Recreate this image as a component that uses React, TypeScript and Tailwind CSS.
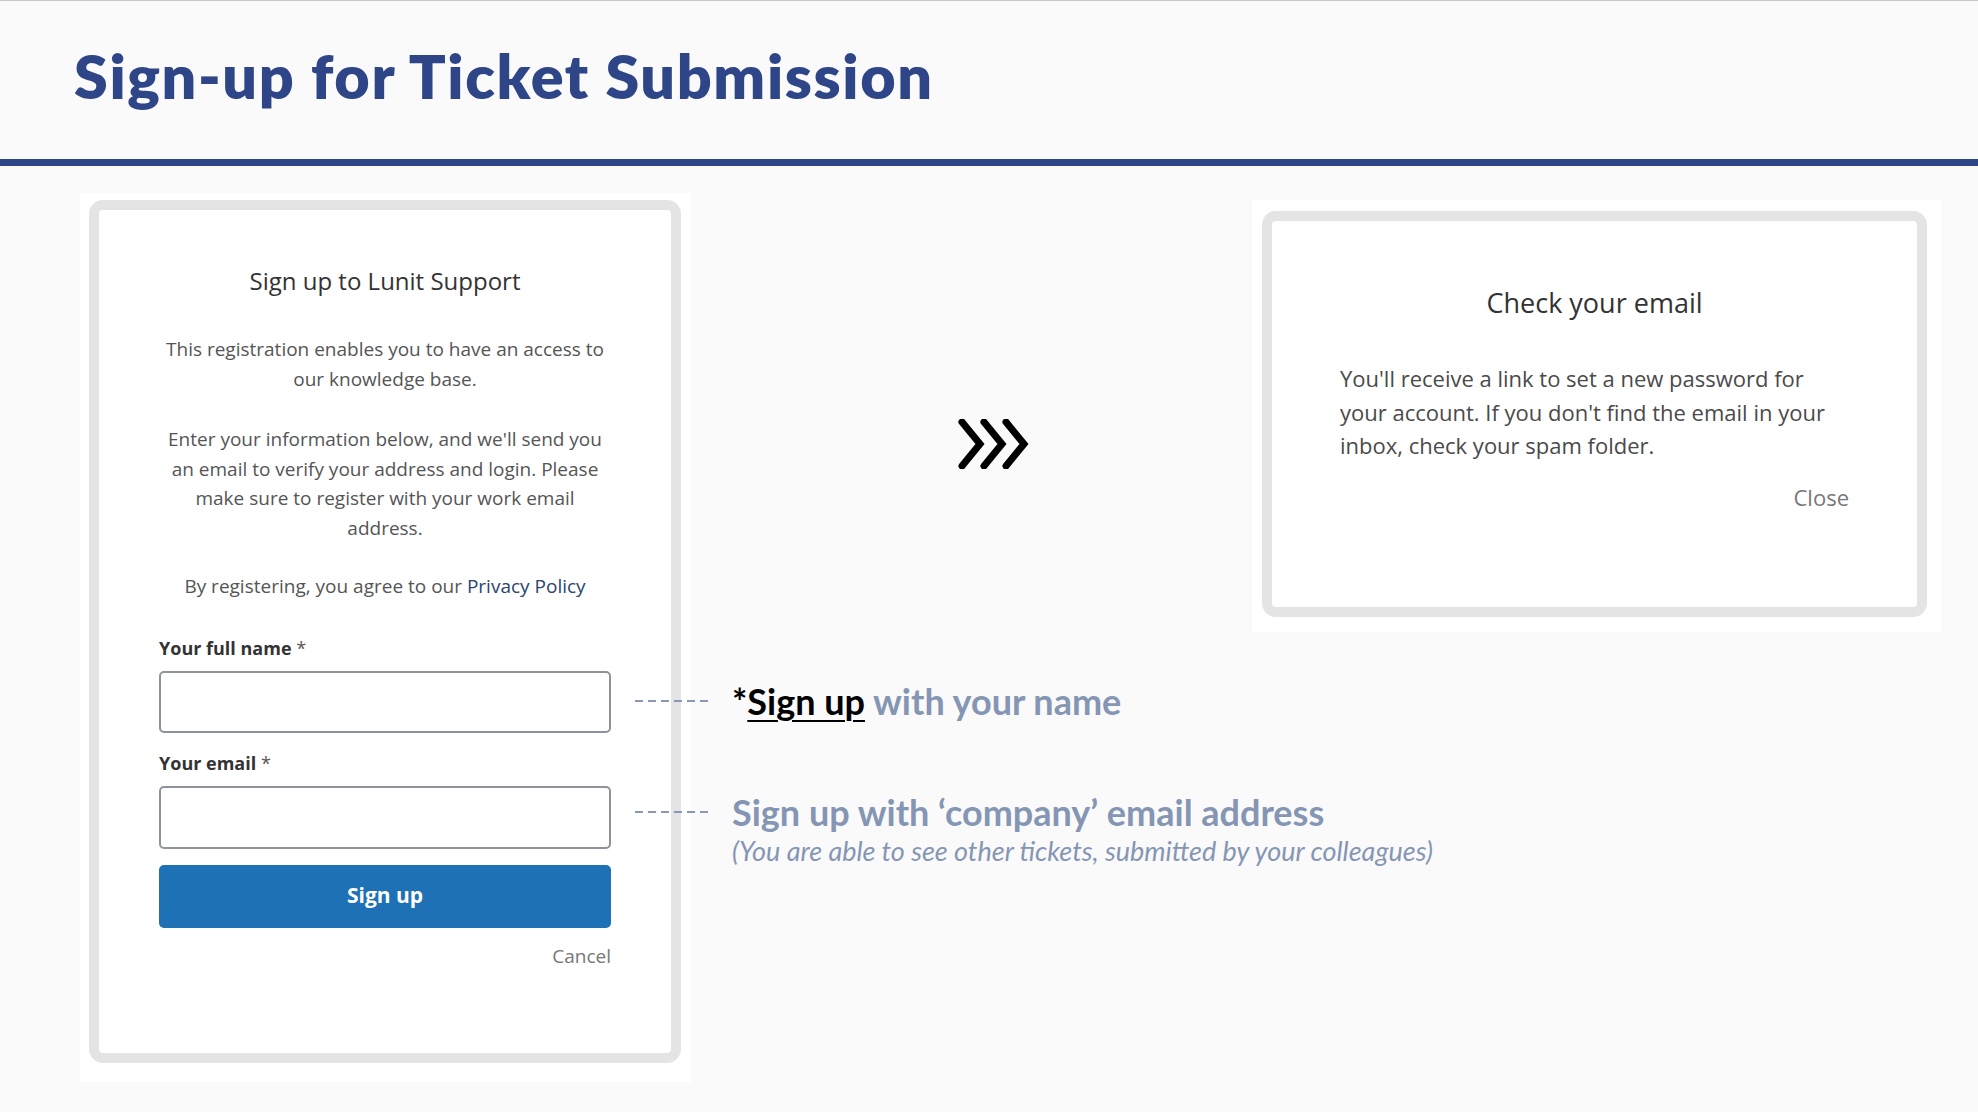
import React from "react";

function Chevrons() {
  return (
    <svg width="72" height="50" viewBox="0 0 72 50" fill="none">
      {[4, 26, 48].map((x) => (
        <path
          key={x}
          d={`M${x} 3 L${x + 18} 25 L${x} 47`}
          stroke="#000"
          strokeWidth="7"
          strokeLinejoin="miter"
          strokeLinecap="round"
        />
      ))}
    </svg>
  );
}

function Dash() {
  return (
    <svg width="78" height="4" viewBox="0 0 78 4" className="shrink-0 ml-[-56px]">
      <line x1="0" y1="2" x2="78" y2="2" stroke="#8a98b6" strokeWidth="2" strokeDasharray="8 5" />
    </svg>
  );
}

function LeftCard() {
  return (
    <div className="w-[611px] h-[889px] bg-white pt-[7px] pb-[19px] pl-[9px] pr-[10px] shrink-0">
      <div className="h-full border-[10px] border-[#e4e4e4] rounded-[14px] bg-white px-[60px] pt-[55px] flex flex-col text-center font-['Open_Sans',sans-serif]">
        <div className="text-[24px] leading-[32px] text-[#333] whitespace-nowrap">Sign up to Lunit Support</div>
        <p className="mt-[38px] text-[19px] leading-[29.5px] text-[#555] whitespace-nowrap">
          This registration enables you to have an access to
          <br />
          our knowledge base.
        </p>
        <p className="mt-[31px] text-[19px] leading-[29.5px] text-[#555] whitespace-nowrap">
          Enter your information below, and we'll send you
          <br />
          an email to verify your address and login. Please
          <br />
          make sure to register with your work email
          <br />
          address.
        </p>
        <p className="mt-[29px] text-[19px] leading-[29.5px] text-[#555] whitespace-nowrap">
          By registering, you agree to our <span className="text-[#2a4470]">Privacy Policy</span>
        </p>
        <label className="mt-[34px] text-left text-[18px] leading-[24px] font-bold text-[#333]">
          Your full name <span className="font-normal text-[#555]">*</span>
        </label>
        <div className="mt-[11px] h-[62px] border-2 border-[#8e939b] rounded-[5px] bg-white" />
        <label className="mt-[18px] text-left text-[18px] leading-[24px] font-bold text-[#333]">
          Your email <span className="font-normal text-[#555]">*</span>
        </label>
        <div className="mt-[11px] h-[63px] border-2 border-[#8e939b] rounded-[5px] bg-white" />
        <button className="mt-[16px] h-[63px] rounded-[5px] bg-[#1f71b5] text-white text-[21px] font-bold">
          Sign up
        </button>
        <div className="mt-[16px] text-right text-[19px] leading-[24px] text-[#777]">Cancel</div>
      </div>
    </div>
  );
}

function RightCard() {
  return (
    <div className="mt-[7px] w-[689px] h-[432px] bg-white pt-[11px] pb-[15px] pl-[10px] pr-[14px] shrink-0">
      <div className="h-full border-[10px] border-[#e4e4e4] rounded-[14px] bg-white pt-[64px] px-[68px] flex flex-col font-['Open_Sans',sans-serif]">
        <div className="text-center text-[27px] leading-[36px] text-[#333] whitespace-nowrap">Check your email</div>
        <p className="mt-[41px] text-[22px] leading-[33.5px] text-[#4a4a4a] whitespace-nowrap">
          You'll receive a link to set a new password for
          <br />
          your account. If you don't find the email in your
          <br />
          inbox, check your spam folder.
        </p>
        <div className="mt-[20px] text-right text-[22px] leading-[28px] text-[#777]">Close</div>
      </div>
    </div>
  );
}

export default function App() {
  return (
    <div className="w-[1978px] h-[1112px] bg-[#fafafa] border-t border-[#c8c8c8] overflow-hidden">
      <header className="h-[158px] pl-[74px] pt-[45px]">
        <h1 className="font-['Lato',sans-serif] font-extrabold text-[61px] leading-[60px] tracking-[1.6px] text-[#2e4587] whitespace-nowrap">
          Sign-up for Ticket Submission
        </h1>
      </header>
      <div className="h-[7px] bg-[#2e4587]" />
      <div className="flex pl-[80px] pt-[27px]">
        <LeftCard />
        <div className="flex flex-col">
          <div className="flex items-start">
            <div className="w-[561px] shrink-0 pl-[267px] pt-[226px]">
              <Chevrons />
            </div>
            <RightCard />
          </div>
          <div className="font-['Lato',sans-serif] text-[#8596b4]">
            <div className="mt-[49px] h-[40px] flex items-center">
              <Dash />
              <div className="ml-[19px] text-[36px] font-bold leading-[40px] whitespace-nowrap">
                <span className="text-black">
                  *<span className="underline decoration-2 underline-offset-[5px]">Sign up</span>
                </span>{" "}
                with your name
              </div>
            </div>
            <div className="mt-[71px] h-[40px] flex items-center">
              <Dash />
              <div className="ml-[19px] text-[36px] font-bold leading-[40px] whitespace-nowrap">
                Sign up with ‘company’ email address
              </div>
            </div>
            <div className="ml-[41px] mt-[2px] text-[27px] italic leading-[34px] whitespace-nowrap">
              (You are able to see other tickets, submitted by your colleagues)
            </div>
          </div>
        </div>
      </div>
    </div>
  );
}
